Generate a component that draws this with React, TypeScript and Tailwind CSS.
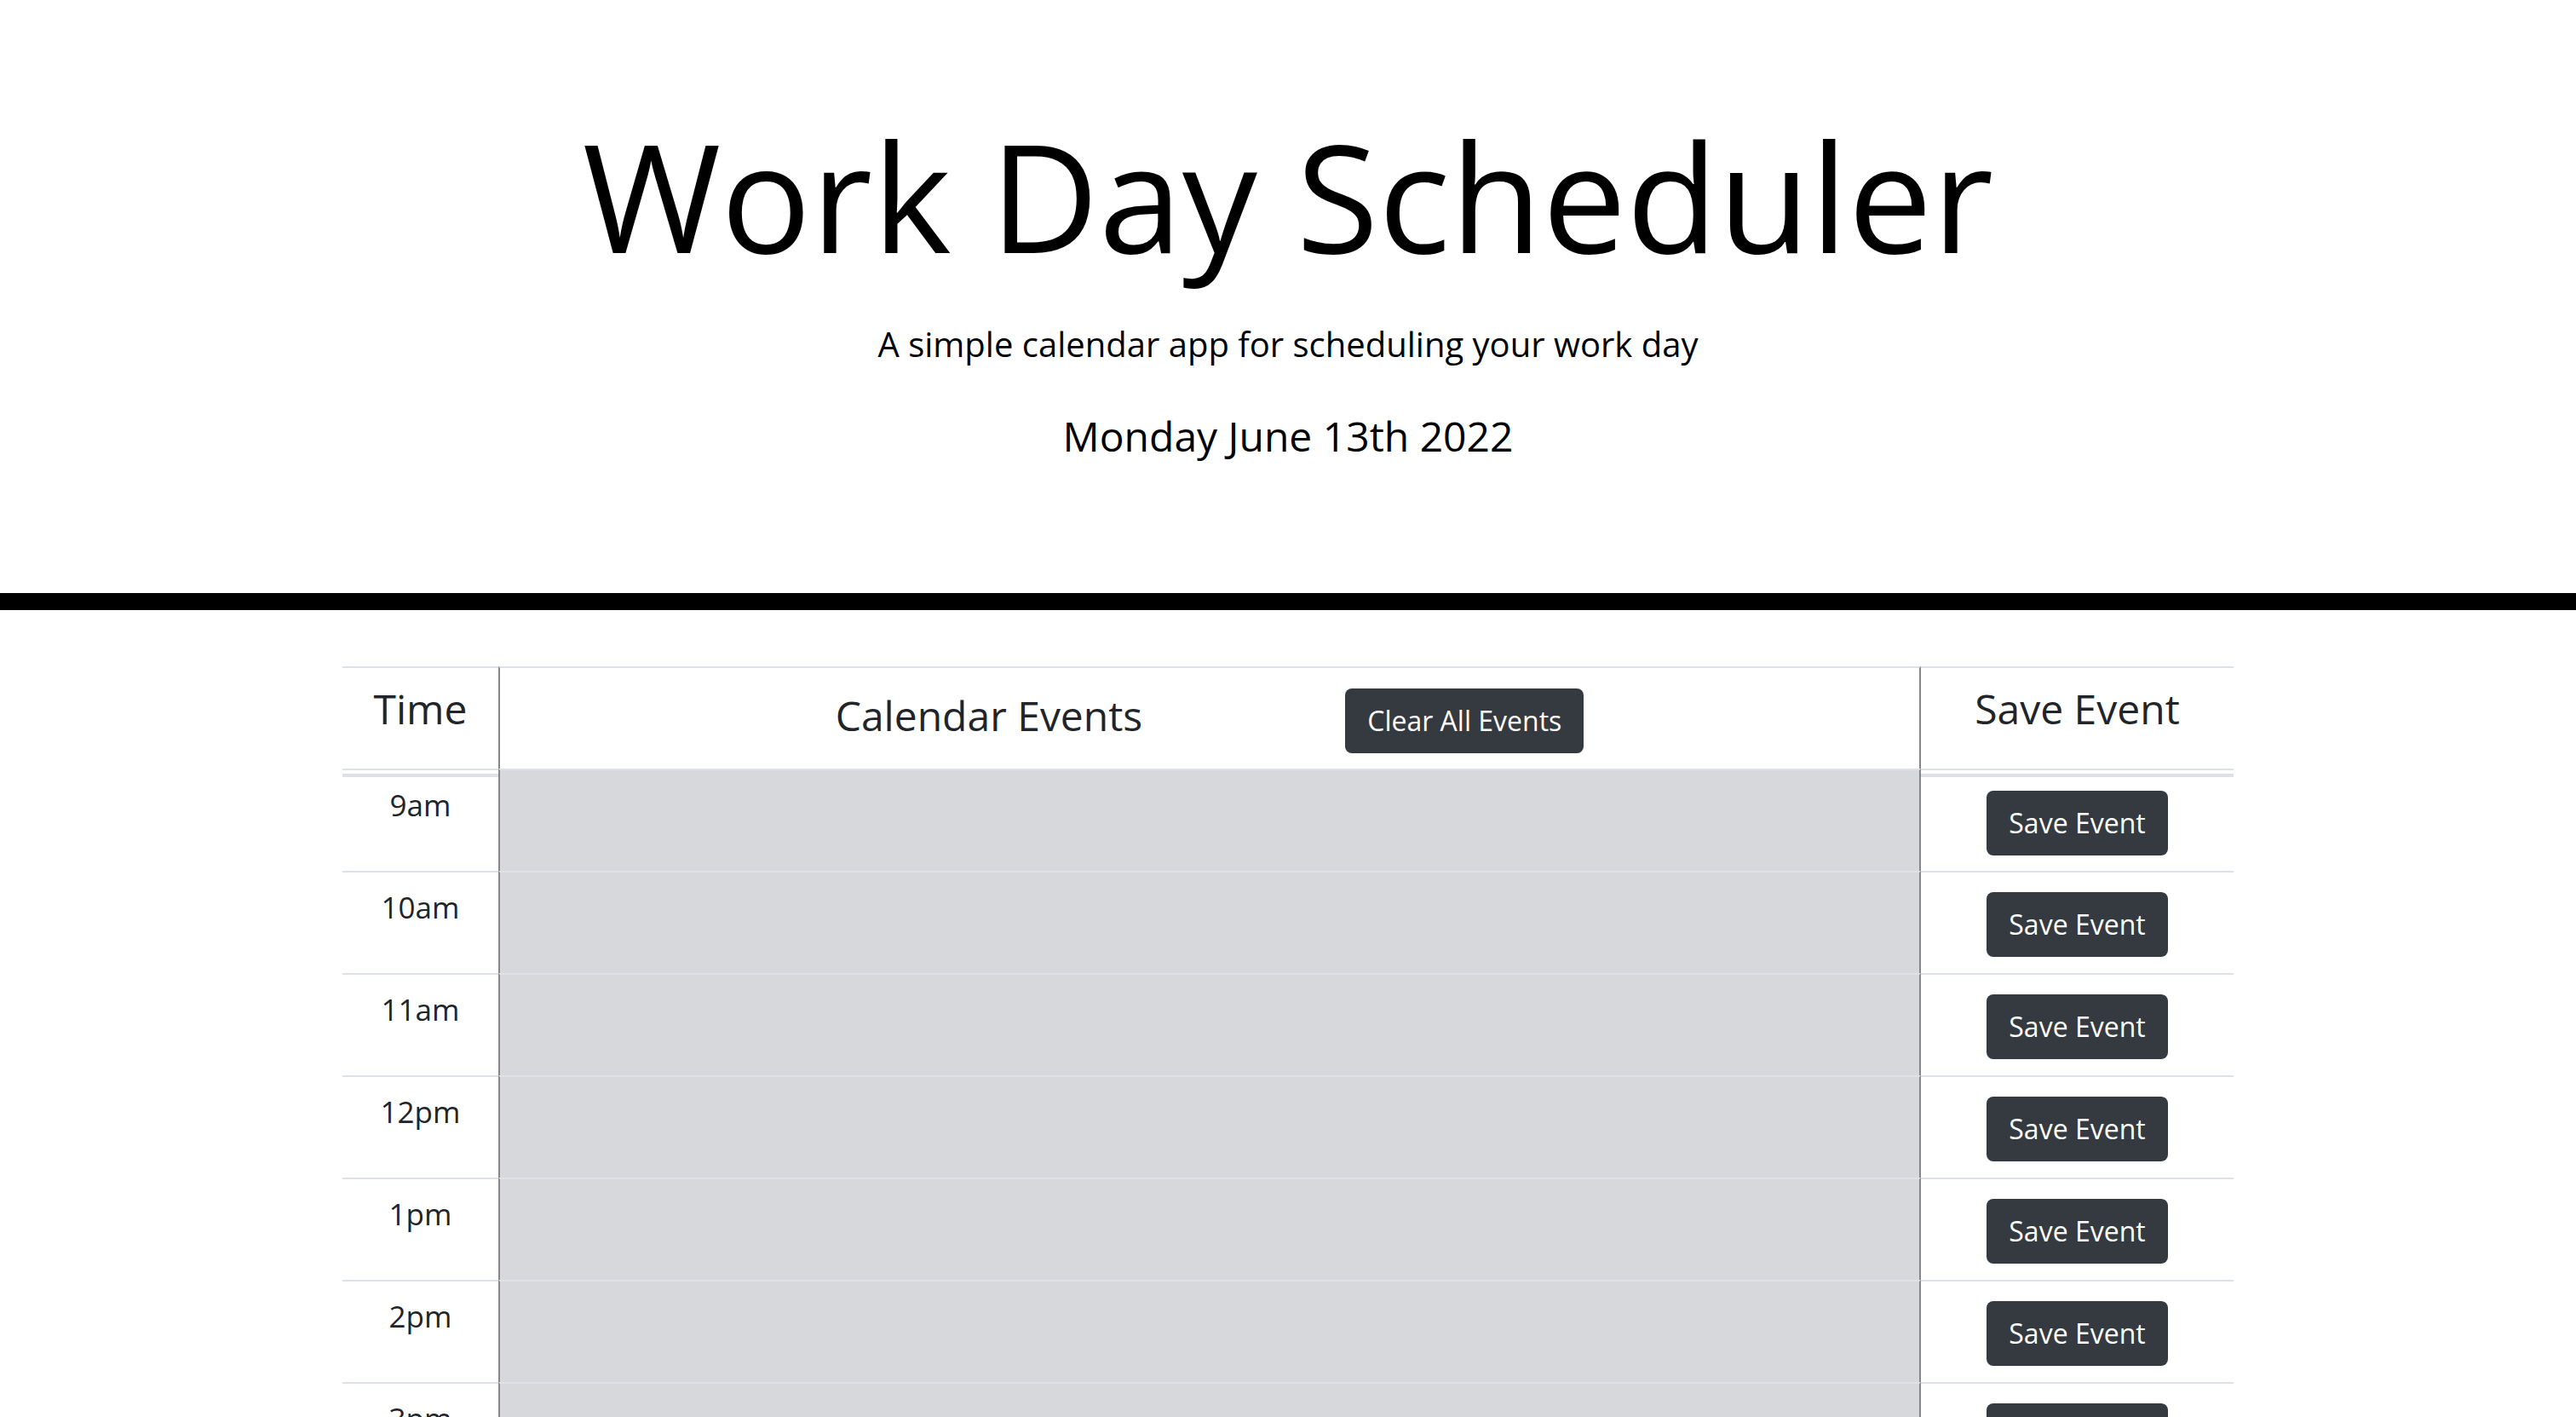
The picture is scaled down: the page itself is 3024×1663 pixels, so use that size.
import { useState } from "react";

const hours = ["9am", "10am", "11am", "12pm", "1pm", "2pm", "3pm", "4pm", "5pm"];

export default function App() {
  const [events, setEvents] = useState<string[]>(hours.map(() => ""));

  const updateEvent = (index: number, value: string) => {
    setEvents((prev) => prev.map((e, i) => (i === index ? value : e)));
  };

  return (
    <div className="min-h-screen bg-white font-['Open_Sans',sans-serif] text-[#212529]">
      {/* Jumbotron */}
      <header className="text-center text-black pt-[124px] pb-[148px] border-b-[20px] border-black">
        <h1 className="text-[176px] leading-[1.2] font-normal">Work Day Scheduler</h1>
        <p className="mt-[39px] text-[40px] leading-[1.5]">A simple calendar app for scheduling your work day</p>
        <p className="mt-[42px] text-[48px] leading-[1.5]">Monday June 13th 2022</p>
      </header>

      {/* Scheduler table */}
      <main className="w-[2220px] mx-auto mt-[66px]">
        <div className="grid grid-cols-[183px_1670px_367px] h-[120px]">
          <div className="border-t-2 border-[#dee2e6] text-center text-[48px] leading-[72px] pt-[12px]">Time</div>
          <div className="border-t-2 border-t-[#dee2e6] border-x-2 border-x-[#868686] flex justify-center items-baseline gap-[238px] pt-[20px]">
            <span className="text-[48px] leading-[72px]">Calendar Events</span>
            <button
              onClick={() => setEvents(hours.map(() => ""))}
              className="h-[76px] px-[26px] rounded-[8px] bg-[#343a40] text-white text-[32px] leading-[48px]"
            >
              Clear All Events
            </button>
          </div>
          <div className="border-t-2 border-[#dee2e6] text-center text-[48px] leading-[72px] pt-[12px]">Save Event</div>
        </div>

        {hours.map((hour, i) => (
          <div key={hour} className="grid grid-cols-[183px_1670px_367px] h-[120px]">
            <div
              className={
                i === 0
                  ? "border-t-2 border-[#dee2e6] text-center text-[35px] leading-[52px] pt-[15px] shadow-[inset_0_4px_0_white,inset_0_8px_0_#dee2e6]"
                  : "border-t-2 border-[#dee2e6] text-center text-[35px] leading-[52px] pt-[15px]"
              }
            >
              {hour}
            </div>
            <div className="border-t-2 border-t-[#dee2e6] border-x-2 border-x-[#868686] bg-[#d6d8db]">
              <textarea
                value={events[i]}
                onChange={(e) => updateEvent(i, e.target.value)}
                className="block w-full h-full bg-transparent resize-none outline-none p-[12px] text-[32px]"
              />
            </div>
            <div
              className={
                i === 0
                  ? "border-t-2 border-[#dee2e6] flex justify-center items-start pt-[24px] shadow-[inset_0_4px_0_white,inset_0_8px_0_#dee2e6]"
                  : "border-t-2 border-[#dee2e6] flex justify-center items-start pt-[23px]"
              }
            >
              <button className="h-[76px] px-[26px] rounded-[8px] bg-[#343a40] text-white text-[32px] leading-[48px]">
                Save Event
              </button>
            </div>
          </div>
        ))}
      </main>
    </div>
  );
}
